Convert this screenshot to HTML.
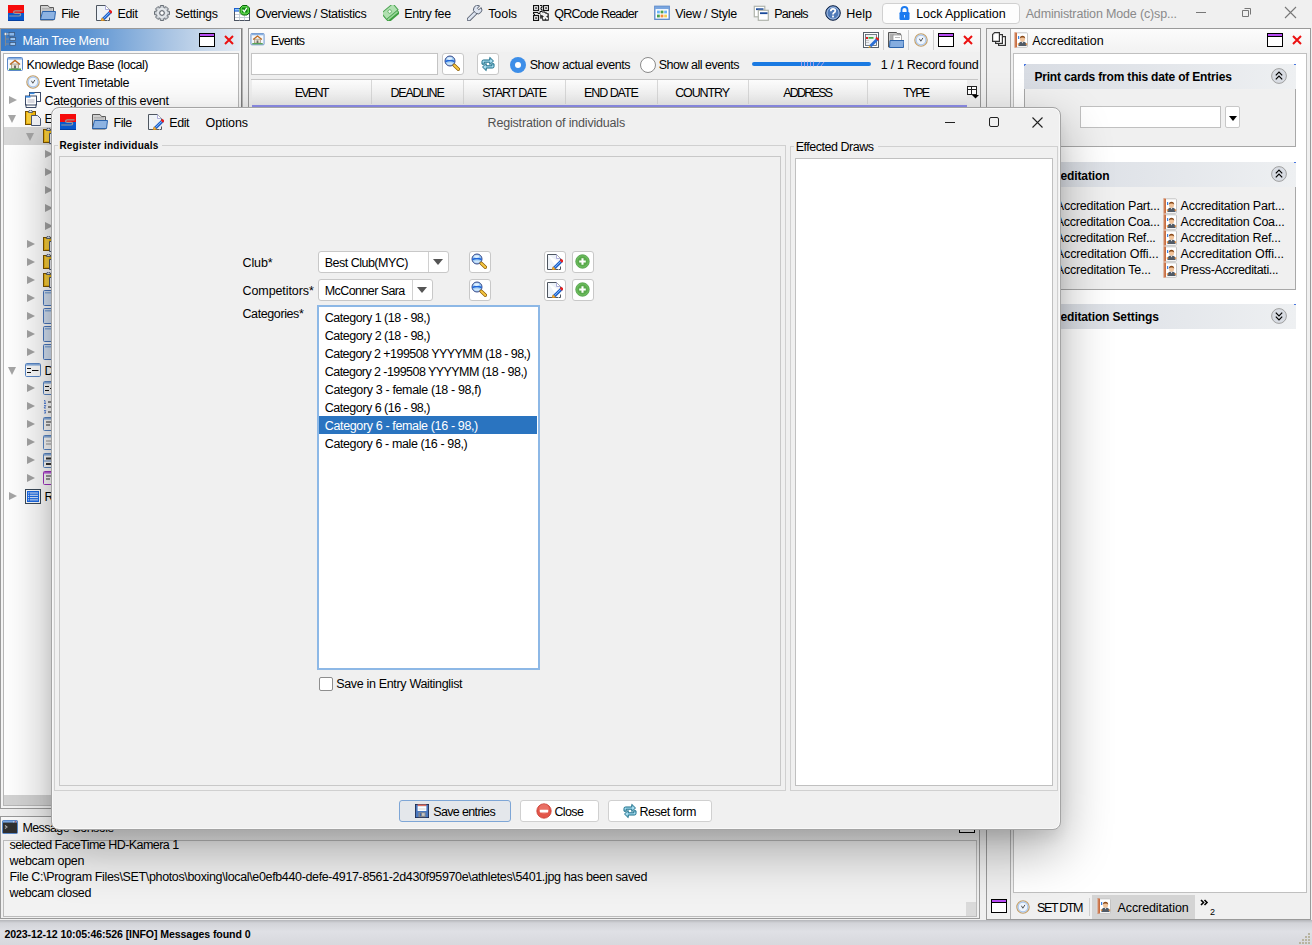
<!DOCTYPE html><html><head><meta charset="utf-8"><style>
*{box-sizing:border-box;margin:0;padding:0}
html,body{width:1312px;height:945px;overflow:hidden;background:#f0f0f0;font-family:"Liberation Sans",sans-serif;position:relative}
.a{position:absolute}
.t{position:absolute;line-height:1;white-space:pre;font-family:"Liberation Sans",sans-serif}
.maxi{position:absolute;width:16px;height:14px;border:1px solid #000;background:linear-gradient(#b84cf4 0 2px,#000 2px 3px,#fff 3px)}
.rx{position:absolute;width:11px;height:11px}
</style></head><body><svg class="a" style="left:8px;top:5px" width="16" height="16" viewBox="0 0 16 16"><rect x="0" y="0" width="16" height="8" fill="#f60a0a"/><rect x="0" y="8" width="16" height="8" fill="#0a58cc"/><rect x="0" y="15" width="16" height="1" fill="#0540a0"/><path d="M14.5 5.8H7.3Q5.6 5.8 5.6 7.2Q5.6 8.4 7.3 8.4H11.2Q12.7 8.4 12.6 9.8Q12.4 11 11 11H1.2" fill="none" stroke="#9a9a9a" stroke-width="1.2"/></svg>
<svg class="a" style="left:40px;top:5px" width="16" height="16" viewBox="0 0 16 16"><path d="M0.5 0.5H8L9.5 2.5H13.5V15H0.5Z" fill="#d0d0d0" stroke="#5a5a5a"/><path d="M2 3.5H12M2 5H12M2 6.5H12" stroke="#aaa" stroke-width="0.8"/><path d="M2.5 6.5H15.5L14.5 14.5H0.5Z" fill="#8db3e2" stroke="#2c64ac"/></svg>
<svg class="a" style="left:96px;top:5px" width="16" height="16" viewBox="0 0 16 16"><path d="M0.5 0.5H9.5L13.5 4.5V9M11 15.5H0.5V0.5" fill="#eef3f9" stroke="#4e5660" stroke-width="1"/><path d="M9.5 0.5V4.5H13.5" fill="#fff" stroke="#9a9ad0" stroke-width="0.8"/><path d="M7.2 14.2L14.6 6.8" stroke="#1d5fc8" stroke-width="3.2"/><path d="M7.6 13.6L14.4 6.8" stroke="#8cc4ff" stroke-width="1"/><path d="M13.6 5.6L15.8 7.8" stroke="#e81e1e" stroke-width="2.6"/><path d="M5 16.3L6 12.8L8.6 15.3Z" fill="#f4b83a" stroke="#c87a10" stroke-width="0.7"/><path d="M11.5 15.5H13.5V12.5" fill="none" stroke="#4e5660" stroke-width="1"/></svg>
<svg class="a" style="left:154px;top:5px" width="16" height="16" viewBox="0 0 16 16"><path d="M13.24 6.03 L15.42 6.34 L15.42 9.66 L13.24 9.97 L13.10 10.31 L14.42 12.07 L12.07 14.42 L10.31 13.10 L9.97 13.24 L9.66 15.42 L6.34 15.42 L6.03 13.24 L5.69 13.10 L3.93 14.42 L1.58 12.07 L2.90 10.31 L2.76 9.97 L0.58 9.66 L0.58 6.34 L2.76 6.03 L2.90 5.69 L1.58 3.93 L3.93 1.58 L5.69 2.90 L6.03 2.76 L6.34 0.58 L9.66 0.58 L9.97 2.76 L10.31 2.90 L12.07 1.58 L14.42 3.93 L13.10 5.69Z" fill="#cfd3d8" stroke="#5f666e" stroke-width="1"/><circle cx="8" cy="8" r="4.2" fill="none" stroke="#e9ecef" stroke-width="1.4"/><circle cx="8" cy="8" r="2.3" fill="#fff" stroke="#50565e" stroke-width="1"/></svg>
<svg class="a" style="left:234px;top:5px" width="16" height="16" viewBox="0 0 16 16"><rect x="0.5" y="3.5" width="15" height="12" fill="#fff" stroke="#4a5260"/><path d="M1 9.5H15M1 12.5H15M5.5 8V15.5M10.5 9.5V15.5" stroke="#c0cad4" stroke-width="0.9"/><rect x="0" y="3" width="5" height="3.6" fill="#1e5fd0"/><rect x="1" y="4.2" width="4" height="1.2" fill="#a8e0ff"/><path d="M8.5 0.5H13L15.5 3V7.5L13 10H8.5L6 7.5V3Z" fill="#5ad04a" stroke="#0a6a0a" stroke-width="1"/><rect x="8" y="2.5" width="5.5" height="5" fill="#0e8a10"/><path d="M8.6 4.6L10.3 6.6L12.8 2.8" fill="none" stroke="#fff" stroke-width="1.3"/></svg>
<svg class="a" style="left:383px;top:5px" width="16" height="16" viewBox="0 0 16 16"><g transform="rotate(-40 8 8)"><rect x="0" y="6" width="15" height="8" fill="#3f9e42"/><rect x="1" y="8" width="13" height="4" fill="#9ad89a"/><rect x="0.5" y="2" width="15" height="8" fill="#b0e0b0" stroke="#4ca452" stroke-width="1"/><circle cx="8" cy="6" r="1.8" fill="#eaf8ea" stroke="#4ca452" stroke-width="0.7"/></g></svg>
<svg class="a" style="left:467px;top:5px" width="16" height="16" viewBox="0 0 16 16"><path d="M2 14.2L9.2 7" stroke="#5a6272" stroke-width="4.4" stroke-linecap="round"/><path d="M2 14.2L9.2 7" stroke="#dde4f0" stroke-width="2.6" stroke-linecap="round"/><path d="M8.4 7.8A4 4 0 0 1 12.6 0.9L10.4 3.3L11.8 4.7L14.2 2.6A4 4 0 0 1 8.9 8.3Z" fill="#dde4f0" stroke="#5a6272" stroke-width="1"/></svg>
<svg class="a" style="left:533px;top:5px" width="16" height="16" viewBox="0 0 16 16"><rect x="0.5" y="0.5" width="5" height="5" fill="none" stroke="#111" stroke-width="1.2"/><rect x="10.5" y="0.5" width="5" height="5" fill="none" stroke="#111" stroke-width="1.2"/><rect x="0.5" y="10.5" width="5" height="5" fill="none" stroke="#111" stroke-width="1.2"/><rect x="2.3" y="2.3" width="1.5" height="1.5" fill="#111"/><rect x="12.3" y="2.3" width="1.5" height="1.5" fill="#111"/><rect x="2.3" y="12.3" width="1.5" height="1.5" fill="#111"/><path d="M7 0.5h2v2h-1v2h1v2h-2v2h-2v-1h-5v1h1v1h1M9 7h3v1h2v1h2v2h-2v1h2v2h-1v2h-2v-2h-1v2h-2v-2h-1v-2h1v-1h-2v2h-1M7 10h1v2" fill="none" stroke="#111" stroke-width="1"/></svg>
<svg class="a" style="left:654px;top:5px" width="16" height="16" viewBox="0 0 16 16"><rect x="0.8" y="1.3" width="14.4" height="13" fill="#fff" stroke="#5a88c8" stroke-width="1.3"/><rect x="1" y="1.5" width="14" height="2.6" fill="#7aa6e0"/><rect x="3" y="5.6" width="2.8" height="2.8" fill="#6ab4f8"/><rect x="6.6" y="5.6" width="2.8" height="2.8" fill="#4aa04a"/><rect x="10.2" y="5.6" width="2.8" height="2.8" fill="#6ab4f8"/><rect x="3" y="9.6" width="2.8" height="2.8" fill="#4aa04a"/><rect x="6.6" y="9.6" width="2.8" height="2.8" fill="#f58a3a"/><rect x="10.2" y="9.6" width="2.8" height="2.8" fill="#f0d050"/></svg>
<svg class="a" style="left:753px;top:5px" width="16" height="16" viewBox="0 0 16 16"><rect x="1.3" y="1.3" width="10.5" height="10.5" fill="#fff" stroke="#b0b4ac" stroke-width="1.2"/><rect x="3" y="3.3" width="7.5" height="1.8" fill="#1a4a9a"/><rect x="5.3" y="5.3" width="10" height="10" fill="#fff" stroke="#b0b4ac" stroke-width="1.2"/><rect x="7" y="7.3" width="7.5" height="1.8" fill="#1a4a9a"/></svg>
<svg class="a" style="left:825px;top:5px" width="16" height="16" viewBox="0 0 16 16"><circle cx="8" cy="8" r="7.3" fill="#4f7ab8" stroke="#0c1f40" stroke-width="1"/><circle cx="8" cy="8" r="6" fill="none" stroke="#c8d8f0" stroke-width="0.7"/><path d="M5.8 6.2Q5.8 3.8 8 3.8Q10.3 3.8 10.3 5.8Q10.3 7.2 8.6 8Q8 8.4 8 9.6" fill="none" stroke="#fff" stroke-width="1.7"/><rect x="7.1" y="10.6" width="1.8" height="1.8" fill="#fff"/></svg>
<span class="t" style="left:61.20px;top:8.42px;font-size:12.5px;font-weight:400;color:#000;letter-spacing:-0.519px;">File</span>
<span class="t" style="left:117.50px;top:8.42px;font-size:12.5px;font-weight:400;color:#000;letter-spacing:-0.382px;">Edit</span>
<span class="t" style="left:175.00px;top:8.42px;font-size:12.5px;font-weight:400;color:#000;letter-spacing:-0.325px;">Settings</span>
<span class="t" style="left:255.80px;top:8.42px;font-size:12.5px;font-weight:400;color:#000;letter-spacing:-0.375px;">Overviews / Statistics</span>
<span class="t" style="left:404.20px;top:8.42px;font-size:12.5px;font-weight:400;color:#000;letter-spacing:-0.391px;">Entry fee</span>
<span class="t" style="left:488.20px;top:8.42px;font-size:12.5px;font-weight:400;color:#000;letter-spacing:-0.072px;">Tools</span>
<span class="t" style="left:554.20px;top:8.42px;font-size:12.5px;font-weight:400;color:#000;letter-spacing:-0.767px;">QRCode Reader</span>
<span class="t" style="left:675.20px;top:8.42px;font-size:12.5px;font-weight:400;color:#000;letter-spacing:-0.289px;">View / Style</span>
<span class="t" style="left:774.20px;top:8.42px;font-size:12.5px;font-weight:400;color:#000;letter-spacing:-0.767px;">Panels</span>
<span class="t" style="left:846.20px;top:8.42px;font-size:12.5px;font-weight:400;color:#000;letter-spacing:0.060px;">Help</span>
<div class="a" style="left:882px;top:3px;width:138px;height:21px;background:#fdfdfd;border:1px solid #d0d0d0;border-radius:4px"></div>
<span class="t" style="left:916.20px;top:8.42px;font-size:12.5px;font-weight:400;color:#000;letter-spacing:-0.063px;">Lock Application</span>
<svg class="a" style="left:898px;top:5px" width="16" height="16" viewBox="0 0 16 16"><path d="M3.5 7V5A3 3 0 0 1 9.5 5V7" fill="none" stroke="#1a7af0" stroke-width="1.8"/><rect x="1.5" y="7" width="10" height="8" rx="1.2" fill="#1a7af0"/><rect x="6" y="10" width="1" height="2.5" fill="#cfe2fb"/></svg>
<span class="t" style="left:1025.70px;top:8.42px;font-size:12.5px;font-weight:400;color:#8a8a8a;letter-spacing:-0.156px;">Administration Mode (c)sp...</span>
<div class="a" style="left:1196px;top:12px;width:10px;height:1px;background:#777"></div>
<svg class="a" style="left:1240px;top:7px" width="12" height="12"><path d="M2.5 3.5h6v6h-6z M4.5 1.5h6v6" fill="none" stroke="#777" stroke-width="1"/></svg>
<svg class="a" style="left:1284px;top:6px" width="13" height="13"><path d="M1 1L12 12M12 1L1 12" stroke="#777" stroke-width="1.1"/></svg>
<div class="a" style="left:0;top:28px;width:242px;height:781px;background:#f5f5f5;border:1px solid #9a9a9a;border-right-color:#808080;box-shadow:1px 0 0 #b4b4b4"></div>
<div class="a" style="left:1px;top:29px;width:239px;height:22px;background:linear-gradient(to right,#397ac6 0%,#5b93d2 35%,#a9c4e3 70%,#e4ebf3 100%)"></div>
<span class="t" style="left:22.60px;top:35.42px;font-size:12.5px;font-weight:400;color:#fff;letter-spacing:-0.310px;">Main Tree Menu</span>
<div class="maxi" style="left:199px;top:33px"></div>
<svg class="a" style="left:224px;top:35px" width="10" height="10" viewBox="0 0 10 10"><path d="M1 1L9 9M9 1L1 9" stroke="#ec1010" stroke-width="2"/></svg>
<div class="a" style="left:3px;top:53px;width:236px;height:753px;background:#fff;border:1px solid #b8b8b8"></div>
<div class="a" style="left:4px;top:795px;width:235px;height:10px;background:#d4d4d4"></div>
<svg class="a" style="left:4px;top:32px" width="16" height="16" viewBox="0 0 16 16"><path d="M1.5 2V14M1.5 7H5M1.5 12H5" stroke="#8a8a8a" stroke-width="0.9"/><circle cx="1.5" cy="2" r="1.2" fill="#fff" stroke="#888" stroke-width="0.6"/><path d="M3 2H5" stroke="#fff" stroke-width="0.8"/><rect x="5" y="0.5" width="5.5" height="3.5" fill="#8ab8ec" stroke="#3a5070" stroke-width="0.7"/><rect x="6" y="5.5" width="5.5" height="3" fill="#9ac4f0" stroke="#3a5070" stroke-width="0.7"/><rect x="6" y="10.5" width="5.5" height="3" fill="#9ac4f0" stroke="#3a5070" stroke-width="0.7"/></svg>
<div class="a" style="left:4px;top:127px;width:60px;height:18px;background:#d9d9d9"></div>
<svg class="a" style="left:7px;top:57px" width="16" height="16" viewBox="0 0 16 16"><rect x="0.5" y="0.5" width="15" height="13" rx="1" fill="#f4f8fc" stroke="#5a88c8"/><rect x="1" y="1" width="14" height="1.6" fill="#8ab0e0"/><path d="M3 7.5L8 3.5L13 7.5" fill="none" stroke="#c06a20" stroke-width="1.5"/><rect x="4.5" y="7" width="7" height="4.5" fill="#e8e0d0" stroke="#8a7050" stroke-width="0.6"/><rect x="7" y="8.5" width="2" height="3" fill="#6a6a6a"/><rect x="2" y="11.5" width="12" height="1.5" fill="#50a050"/></svg>
<span class="t" style="left:26.60px;top:59.42px;font-size:12.5px;font-weight:400;color:#000;letter-spacing:-0.449px;">Knowledge Base (local)</span>
<svg class="a" style="left:26px;top:75px" width="14" height="14" viewBox="0 0 16 16"><circle cx="8" cy="8" r="7.1" fill="#e4eefa" stroke="#c4a06a" stroke-width="1.3"/><circle cx="8" cy="8" r="5.6" fill="#eef5fd" stroke="#88b0e4" stroke-width="0.9"/><path d="M6.2 6.6L7.8 9.4L10.2 5.6" fill="none" stroke="#4a4a4a" stroke-width="1.1"/></svg>
<span class="t" style="left:44.50px;top:77.42px;font-size:12.5px;font-weight:400;color:#000;letter-spacing:-0.339px;">Event Timetable</span>
<div class="a" style="left:9px;top:96.0px;width:0;height:0;border-top:4.5px solid transparent;border-bottom:4.5px solid transparent;border-left:8px solid #a6a6a6"></div>
<svg class="a" style="left:25px;top:92px" width="16" height="16" viewBox="0 0 16 16"><rect x="4.5" y="0.5" width="11" height="9" fill="#fff" stroke="#2a3a5a" stroke-width="0.9"/><rect x="4.5" y="0.5" width="5" height="1.6" fill="#3a8ae0"/><rect x="0.5" y="4" width="11" height="9" fill="#fff" stroke="#2a3a5a" stroke-width="0.9"/><rect x="0.5" y="4" width="5" height="1.6" fill="#3a8ae0"/><path d="M2.5 8H9.5M2.5 10H9.5" stroke="#aab" stroke-width="0.8"/><path d="M1 12.5V15.5H11V12.5" fill="none" stroke="#2a3a5a" stroke-width="0.9"/></svg>
<span class="t" style="left:44.50px;top:95.42px;font-size:12.5px;font-weight:400;color:#000;letter-spacing:-0.301px;">Categories of this event</span>
<div class="a" style="left:8px;top:115px;width:0;height:0;border-left:4.5px solid transparent;border-right:4.5px solid transparent;border-top:8px solid #a6a6a6"></div>
<svg class="a" style="left:25px;top:110px" width="16" height="16" viewBox="0 0 16 16"><rect x="0.5" y="1.5" width="10" height="13" fill="#f0b810" stroke="#7a5400" stroke-width="1"/><rect x="2" y="3" width="4" height="10" fill="#ffe060" opacity="0.6"/><path d="M3.5 2.5Q3.5 0 5.5 0Q7.5 0 7.5 2.5Z" fill="#e8eef8" stroke="#3a4a6a" stroke-width="0.8"/><path d="M6.5 5.5H12.5L15.5 8.5V15.5H6.5Z" fill="#f4f6fa" stroke="#3a4a6a" stroke-width="0.9"/></svg>
<span class="t" style="left:44.50px;top:113.42px;font-size:12.5px;font-weight:400;color:#000;">E</span>
<div class="a" style="left:26px;top:133px;width:0;height:0;border-left:4.5px solid transparent;border-right:4.5px solid transparent;border-top:8px solid #a6a6a6"></div>
<svg class="a" style="left:43px;top:128px" width="16" height="16" viewBox="0 0 16 16"><rect x="0.5" y="1.5" width="10" height="13" fill="#f0b810" stroke="#7a5400" stroke-width="1"/><rect x="2" y="3" width="4" height="10" fill="#ffe060" opacity="0.6"/><path d="M3.5 2.5Q3.5 0 5.5 0Q7.5 0 7.5 2.5Z" fill="#e8eef8" stroke="#3a4a6a" stroke-width="0.8"/><path d="M6.5 5.5H12.5L15.5 8.5V15.5H6.5Z" fill="#f4f6fa" stroke="#3a4a6a" stroke-width="0.9"/></svg>
<div class="a" style="left:45px;top:150.0px;width:0;height:0;border-top:4.5px solid transparent;border-bottom:4.5px solid transparent;border-left:8px solid #a6a6a6"></div>
<div class="a" style="left:45px;top:168.0px;width:0;height:0;border-top:4.5px solid transparent;border-bottom:4.5px solid transparent;border-left:8px solid #a6a6a6"></div>
<div class="a" style="left:45px;top:186.0px;width:0;height:0;border-top:4.5px solid transparent;border-bottom:4.5px solid transparent;border-left:8px solid #a6a6a6"></div>
<div class="a" style="left:45px;top:204.0px;width:0;height:0;border-top:4.5px solid transparent;border-bottom:4.5px solid transparent;border-left:8px solid #a6a6a6"></div>
<div class="a" style="left:45px;top:222.0px;width:0;height:0;border-top:4.5px solid transparent;border-bottom:4.5px solid transparent;border-left:8px solid #a6a6a6"></div>
<div class="a" style="left:27px;top:240.0px;width:0;height:0;border-top:4.5px solid transparent;border-bottom:4.5px solid transparent;border-left:8px solid #a6a6a6"></div>
<svg class="a" style="left:43px;top:236px" width="16" height="16" viewBox="0 0 16 16"><rect x="0.5" y="1.5" width="10" height="13" fill="#f0b810" stroke="#7a5400" stroke-width="1"/><rect x="2" y="3" width="4" height="10" fill="#ffe060" opacity="0.6"/><path d="M3.5 2.5Q3.5 0 5.5 0Q7.5 0 7.5 2.5Z" fill="#e8eef8" stroke="#3a4a6a" stroke-width="0.8"/><path d="M6.5 5.5H12.5L15.5 8.5V15.5H6.5Z" fill="#f4f6fa" stroke="#3a4a6a" stroke-width="0.9"/></svg>
<div class="a" style="left:27px;top:258.0px;width:0;height:0;border-top:4.5px solid transparent;border-bottom:4.5px solid transparent;border-left:8px solid #a6a6a6"></div>
<svg class="a" style="left:43px;top:254px" width="16" height="16" viewBox="0 0 16 16"><rect x="0.5" y="1.5" width="10" height="13" fill="#f0b810" stroke="#7a5400" stroke-width="1"/><rect x="2" y="3" width="4" height="10" fill="#ffe060" opacity="0.6"/><path d="M3.5 2.5Q3.5 0 5.5 0Q7.5 0 7.5 2.5Z" fill="#e8eef8" stroke="#3a4a6a" stroke-width="0.8"/><path d="M6.5 5.5H12.5L15.5 8.5V15.5H6.5Z" fill="#f4f6fa" stroke="#3a4a6a" stroke-width="0.9"/></svg>
<div class="a" style="left:27px;top:276.0px;width:0;height:0;border-top:4.5px solid transparent;border-bottom:4.5px solid transparent;border-left:8px solid #a6a6a6"></div>
<svg class="a" style="left:43px;top:272px" width="16" height="16" viewBox="0 0 16 16"><rect x="0.5" y="1.5" width="10" height="13" fill="#f0b810" stroke="#7a5400" stroke-width="1"/><rect x="2" y="3" width="4" height="10" fill="#ffe060" opacity="0.6"/><path d="M3.5 2.5Q3.5 0 5.5 0Q7.5 0 7.5 2.5Z" fill="#e8eef8" stroke="#3a4a6a" stroke-width="0.8"/><path d="M6.5 5.5H12.5L15.5 8.5V15.5H6.5Z" fill="#f4f6fa" stroke="#3a4a6a" stroke-width="0.9"/></svg>
<div class="a" style="left:27px;top:294.0px;width:0;height:0;border-top:4.5px solid transparent;border-bottom:4.5px solid transparent;border-left:8px solid #a6a6a6"></div>
<svg class="a" style="left:43px;top:290px" width="16" height="16" viewBox="0 0 16 16"><rect x="0.5" y="0.5" width="13" height="15" rx="1" fill="#d6e4f6" stroke="#4a78c0"/><rect x="2" y="2" width="10" height="1.5" fill="#8ab0e0"/><path d="M10 15L15 9V15Z" fill="#e8c060"/></svg>
<div class="a" style="left:27px;top:312.0px;width:0;height:0;border-top:4.5px solid transparent;border-bottom:4.5px solid transparent;border-left:8px solid #a6a6a6"></div>
<svg class="a" style="left:43px;top:308px" width="16" height="16" viewBox="0 0 16 16"><rect x="0.5" y="0.5" width="13" height="15" rx="1" fill="#d6e4f6" stroke="#4a78c0"/><rect x="2" y="2" width="10" height="1.5" fill="#8ab0e0"/><path d="M10 15L15 9V15Z" fill="#e8c060"/></svg>
<div class="a" style="left:27px;top:330.0px;width:0;height:0;border-top:4.5px solid transparent;border-bottom:4.5px solid transparent;border-left:8px solid #a6a6a6"></div>
<svg class="a" style="left:43px;top:326px" width="16" height="16" viewBox="0 0 16 16"><rect x="0.5" y="0.5" width="13" height="15" rx="1" fill="#d6e4f6" stroke="#4a78c0"/><rect x="2" y="2" width="10" height="1.5" fill="#8ab0e0"/><path d="M10 15L15 9V15Z" fill="#e8c060"/></svg>
<div class="a" style="left:27px;top:348.0px;width:0;height:0;border-top:4.5px solid transparent;border-bottom:4.5px solid transparent;border-left:8px solid #a6a6a6"></div>
<svg class="a" style="left:43px;top:344px" width="16" height="16" viewBox="0 0 16 16"><rect x="0.5" y="0.5" width="13" height="15" rx="1" fill="#d6e4f6" stroke="#4a78c0"/><rect x="2" y="2" width="10" height="1.5" fill="#8ab0e0"/><path d="M10 15L15 9V15Z" fill="#e8c060"/></svg>
<div class="a" style="left:8px;top:367px;width:0;height:0;border-left:4.5px solid transparent;border-right:4.5px solid transparent;border-top:8px solid #a6a6a6"></div>
<svg class="a" style="left:25px;top:363px" width="16" height="16" viewBox="0 0 16 16"><rect x="0.5" y="0.5" width="15" height="13" rx="1.2" fill="#fff" stroke="#5a88c8" stroke-width="1"/><rect x="1" y="1" width="14" height="1.6" fill="#8ab0e0"/><path d="M2 5.5H6M7 7.5H13.5M2 9.5H6" stroke="#111" stroke-width="1.2"/></svg>
<span class="t" style="left:44.50px;top:365.42px;font-size:12.5px;font-weight:400;color:#000;">D</span>
<div class="a" style="left:27px;top:384.0px;width:0;height:0;border-top:4.5px solid transparent;border-bottom:4.5px solid transparent;border-left:8px solid #a6a6a6"></div>
<svg class="a" style="left:43px;top:381px" width="16" height="16" viewBox="0 0 16 16"><rect x="0.5" y="0.5" width="15" height="13" rx="1.2" fill="#fff" stroke="#5a88c8" stroke-width="1"/><rect x="1" y="1" width="14" height="1.6" fill="#8ab0e0"/><path d="M2 5.5H6M7 7.5H13.5M2 9.5H6" stroke="#111" stroke-width="1.2"/></svg>
<div class="a" style="left:27px;top:402.0px;width:0;height:0;border-top:4.5px solid transparent;border-bottom:4.5px solid transparent;border-left:8px solid #a6a6a6"></div>
<svg class="a" style="left:43px;top:399px" width="16" height="16" viewBox="0 0 16 16"><path d="M1 1.5H2V4.5M1 4.5H3M1 6.5H2.8L1 9H3M1 11.5H2.8L2 12.8L2.8 14H1" fill="none" stroke="#4a7ad8" stroke-width="0.9"/><path d="M5 3H13M5 8H13M5 13H13" stroke="#222" stroke-width="1.2"/></svg>
<div class="a" style="left:27px;top:420.0px;width:0;height:0;border-top:4.5px solid transparent;border-bottom:4.5px solid transparent;border-left:8px solid #a6a6a6"></div>
<svg class="a" style="left:43px;top:417px" width="16" height="16" viewBox="0 0 16 16"><rect x="0.5" y="0.5" width="12" height="13" rx="1" fill="#fff" stroke="#5a88c8"/><rect x="1" y="1" width="11" height="1.6" fill="#8ab0e0"/><path d="M3 5H10M3 8H7" stroke="#333" stroke-width="1.1"/><path d="M9 15L15 9" stroke="#c8641a" stroke-width="2.6"/><circle cx="10" cy="14" r="1.6" fill="#e8a060"/></svg>
<div class="a" style="left:27px;top:438.0px;width:0;height:0;border-top:4.5px solid transparent;border-bottom:4.5px solid transparent;border-left:8px solid #a6a6a6"></div>
<svg class="a" style="left:43px;top:435px" width="16" height="16" viewBox="0 0 16 16"><rect x="0.5" y="0.5" width="12" height="14" rx="1" fill="#fff" stroke="#5a88c8"/><rect x="1" y="1" width="11" height="1.6" fill="#8ab0e0"/><path d="M3 6H9M3 9H9" stroke="#999" stroke-width="1"/></svg>
<div class="a" style="left:27px;top:456.0px;width:0;height:0;border-top:4.5px solid transparent;border-bottom:4.5px solid transparent;border-left:8px solid #a6a6a6"></div>
<svg class="a" style="left:43px;top:453px" width="16" height="16" viewBox="0 0 16 16"><rect x="0.5" y="0.5" width="12" height="14" rx="1" fill="#fff" stroke="#5a88c8"/><rect x="1" y="1" width="11" height="1.6" fill="#8ab0e0"/><path d="M3 5.5H12M3 11H12" stroke="#333" stroke-width="1.8"/><path d="M1 8H12" stroke="#5a88c8" stroke-width="1"/></svg>
<div class="a" style="left:27px;top:474.0px;width:0;height:0;border-top:4.5px solid transparent;border-bottom:4.5px solid transparent;border-left:8px solid #a6a6a6"></div>
<svg class="a" style="left:43px;top:471px" width="16" height="16" viewBox="0 0 16 16"><rect x="0.5" y="0.5" width="12" height="13" rx="1" fill="#fff" stroke="#a030c0"/><rect x="1" y="1" width="11" height="1.6" fill="#c060e0"/><path d="M3 5H10M3 8H7" stroke="#333" stroke-width="1.1"/><path d="M9 15L15 9" stroke="#c8641a" stroke-width="2.6"/><circle cx="10" cy="14" r="1.6" fill="#e8a060"/></svg>
<div class="a" style="left:9px;top:492.0px;width:0;height:0;border-top:4.5px solid transparent;border-bottom:4.5px solid transparent;border-left:8px solid #a6a6a6"></div>
<svg class="a" style="left:25px;top:489px" width="16" height="16" viewBox="0 0 16 16"><rect x="0.5" y="0.5" width="15" height="14" fill="#fff" stroke="#3a4a5a" stroke-width="1"/><rect x="2" y="2" width="12" height="11" fill="#1a6ae8"/><path d="M3 4H13M3 6.3H13M3 8.6H13M3 10.9H13" stroke="#fff" stroke-width="0.9"/><path d="M4.5 3.5V12" stroke="#1a6ae8" stroke-width="0.8"/></svg>
<span class="t" style="left:44.50px;top:491.42px;font-size:12.5px;font-weight:400;color:#000;">R</span>
<div class="a" style="left:248px;top:28px;width:733px;height:781px;background:#f0f0f0;border:1px solid #9a9a9a"></div>
<div class="a" style="left:249px;top:29px;width:731px;height:23px;background:linear-gradient(#fcfcfc,#f2f2f2)"></div>
<span class="t" style="left:270.70px;top:35.42px;font-size:12.5px;font-weight:400;color:#000;letter-spacing:-0.764px;">Events</span>
<svg class="a" style="left:250px;top:33px" width="15" height="14" viewBox="0 0 16 16"><rect x="0.5" y="0.5" width="15" height="13" rx="1" fill="#f4f8fc" stroke="#5a88c8"/><rect x="1" y="1" width="14" height="1.6" fill="#8ab0e0"/><path d="M3 7.5L8 3.5L13 7.5" fill="none" stroke="#c06a20" stroke-width="1.5"/><rect x="4.5" y="7" width="7" height="4.5" fill="#e8e0d0" stroke="#8a7050" stroke-width="0.6"/><rect x="7" y="8.5" width="2" height="3" fill="#6a6a6a"/><rect x="2" y="11.5" width="12" height="1.5" fill="#50a050"/></svg>
<svg class="a" style="left:863px;top:32px" width="16" height="16" viewBox="0 0 16 16"><rect x="0.5" y="0.5" width="15" height="15" fill="#fff" stroke="#56606a"/><rect x="2.5" y="2.5" width="11" height="11" fill="#eef1f5" stroke="#56606a" stroke-width="0.8"/><rect x="3" y="5" width="2" height="2" fill="#e02020"/><rect x="5.5" y="5.2" width="5" height="1.4" fill="#1a9a1a"/><path d="M3 8.5H6M3 10.5H6" stroke="#bbb" stroke-width="0.8"/><path d="M7 14.5L14.5 7" stroke="#2b6fd6" stroke-width="2.8"/><path d="M13 5.5L15.6 8" stroke="#e0201a" stroke-width="2"/><path d="M5.5 16L6.3 13.4L8.2 15Z" fill="#f0b030"/></svg>
<svg class="a" style="left:888px;top:32px" width="16" height="16" viewBox="0 0 16 16"><path d="M0.5 0.5H8.5L9.5 1.8H12.5V15H0.5Z" fill="#c8c8c8" stroke="#555"/><path d="M2 3H6M2 5H6M2 7H6" stroke="#888" stroke-width="0.8"/><rect x="5" y="3" width="8.5" height="6" fill="#fff" stroke="#999" stroke-width="0.8"/><path d="M7 5.5H12" stroke="#aaa" stroke-width="0.8"/><path d="M2 8.5H16L15.5 15.5H1.5Z" fill="#85ade0" stroke="#2c64ac"/></svg>
<svg class="a" style="left:914px;top:33px" width="14" height="14" viewBox="0 0 16 16"><circle cx="8" cy="8" r="7.1" fill="#e4eefa" stroke="#c4a06a" stroke-width="1.3"/><circle cx="8" cy="8" r="5.6" fill="#eef5fd" stroke="#88b0e4" stroke-width="0.9"/><path d="M6.2 6.6L7.8 9.4L10.2 5.6" fill="none" stroke="#4a4a4a" stroke-width="1.1"/></svg>
<div class="a" style="left:883px;top:30px;width:1px;height:20px;background:#d0d0d0"></div>
<div class="a" style="left:908px;top:30px;width:1px;height:20px;background:#d0d0d0"></div>
<div class="a" style="left:933px;top:30px;width:1px;height:20px;background:#d0d0d0"></div>
<div class="maxi" style="left:938px;top:33px"></div>
<svg class="a" style="left:963px;top:35px" width="10" height="10" viewBox="0 0 10 10"><path d="M1 1L9 9M9 1L1 9" stroke="#ec1010" stroke-width="2"/></svg>
<div class="a" style="left:251px;top:53px;width:187px;height:22px;background:#fff;border:1px solid #c4c4c4"></div>
<div class="a" style="left:442px;top:53px;width:22px;height:22px;background:#fff;border:1px solid #c8c8c8;border-radius:3px"></div>
<div class="a" style="left:477px;top:53px;width:22px;height:22px;background:#fff;border:1px solid #c8c8c8;border-radius:3px"></div>
<div class="a" style="left:510px;top:57px;width:16px;height:16px;border-radius:50%;background:#3d8ee8"></div><div class="a" style="left:515px;top:62px;width:6px;height:6px;border-radius:50%;background:#fff"></div>
<span class="t" style="left:529.70px;top:58.82px;font-size:12.5px;font-weight:400;color:#000;letter-spacing:-0.442px;">Show actual events</span>
<div class="a" style="left:640px;top:57px;width:16px;height:16px;border-radius:50%;background:#fff;border:1px solid #8a8a8a"></div>
<span class="t" style="left:658.70px;top:58.82px;font-size:12.5px;font-weight:400;color:#000;letter-spacing:-0.476px;">Show all events</span>
<div class="a" style="left:752px;top:62px;width:119px;height:4px;border-radius:2px;background:#1a7ae2"></div>
<svg class="a" style="left:800px;top:61px" width="26" height="6"><path d="M1.5 0.5V5.5M4.5 0.5V5.5M7.5 0.5V5.5M10.5 0.5V5.5M13.5 0.5V5.5M17 5L20 1M21 5L24 1" stroke="#c8a8e8" stroke-width="0.8"/></svg>
<span class="t" style="left:880.80px;top:58.82px;font-size:12.5px;font-weight:400;color:#000;letter-spacing:-0.292px;">1 / 1 Record found</span>
<div class="a" style="left:251px;top:79px;width:727px;height:29px;background:#f0f0f0;border-top:1px solid #c8c8c8"></div>
<div class="a" style="left:252px;top:80px;width:715px;height:25px;background:linear-gradient(#fefefe,#f4f4f4 60%,#ececec)"></div>
<div class="a" style="left:252px;top:105px;width:715px;height:3px;background:#9090ec"></div>
<div class="a" style="left:371px;top:80px;width:1px;height:24px;background:#dadada"></div>
<div class="a" style="left:463px;top:80px;width:1px;height:24px;background:#dadada"></div>
<div class="a" style="left:565px;top:80px;width:1px;height:24px;background:#dadada"></div>
<div class="a" style="left:657px;top:80px;width:1px;height:24px;background:#dadada"></div>
<div class="a" style="left:748px;top:80px;width:1px;height:24px;background:#dadada"></div>
<div class="a" style="left:867px;top:80px;width:1px;height:24px;background:#dadada"></div>
<span class="t" style="left:294.70px;top:87.42px;font-size:12.5px;font-weight:400;color:#000;letter-spacing:-1.772px;">EVENT</span>
<span class="t" style="left:390.40px;top:87.42px;font-size:12.5px;font-weight:400;color:#000;letter-spacing:-1.162px;">DEADLINE</span>
<span class="t" style="left:482.20px;top:87.42px;font-size:12.5px;font-weight:400;color:#000;letter-spacing:-1.176px;">START DATE</span>
<span class="t" style="left:584.00px;top:87.42px;font-size:12.5px;font-weight:400;color:#000;letter-spacing:-1.054px;">END DATE</span>
<span class="t" style="left:675.20px;top:87.42px;font-size:12.5px;font-weight:400;color:#000;letter-spacing:-1.116px;">COUNTRY</span>
<span class="t" style="left:783.20px;top:87.42px;font-size:12.5px;font-weight:400;color:#000;letter-spacing:-1.756px;">ADDRESS</span>
<span class="t" style="left:903.20px;top:87.42px;font-size:12.5px;font-weight:400;color:#000;letter-spacing:-1.919px;">TYPE</span>
<div class="a" style="left:986px;top:28px;width:325px;height:892px;background:#f0f0f0;border:1px solid #9a9a9a"></div>
<div class="a" style="left:1010px;top:29px;width:1px;height:890px;background:#b0b0b0"></div>
<div class="a" style="left:1011px;top:29px;width:299px;height:24px;background:linear-gradient(#fcfcfc,#f2f2f2)"></div>
<span class="t" style="left:1032.20px;top:35.12px;font-size:12.5px;font-weight:400;color:#000;letter-spacing:-0.072px;">Accreditation</span>
<svg class="a" style="left:992px;top:32px" width="14" height="14" viewBox="0 0 14 14"><rect x="6.6" y="4.6" width="6.8" height="8.8" fill="#fff" stroke="#333" stroke-width="1.2"/><rect x="3.6" y="2.6" width="6.8" height="8.8" fill="#fff" stroke="#333" stroke-width="1.2"/><path d="M2.6 0.6H7.4V9.4H0.6V2.6Z" fill="#fff" stroke="#333" stroke-width="1.2"/><path d="M0.9 2.5L2.5 0.9V2.5Z" fill="#aaa"/></svg>
<svg class="a" style="left:1013px;top:32px" width="16" height="16" viewBox="0 0 16 16"><rect x="3.5" y="0.8" width="11" height="14.5" rx="1" fill="#fff" stroke="#c4c4c4" stroke-width="1"/><rect x="1.4" y="0.5" width="2.4" height="15" fill="#c85a24"/><path d="M0.6 2H2.6M0.6 4H2.6M0.6 6H2.6M0.6 8H2.6M0.6 10H2.6M0.6 12H2.6M0.6 14H2.6" stroke="#e8e8e8" stroke-width="0.9"/><rect x="5" y="4" width="1.2" height="3" fill="#3a80e0"/><path d="M5.4 14Q5.4 9.6 9.5 9.6Q13.6 9.6 13.6 14Z" fill="#505a66"/><path d="M8.6 9.8L9.5 11.5L10.4 9.8Z" fill="#eee"/><circle cx="9.5" cy="7.2" r="2.5" fill="#f2c49a"/><path d="M6.8 6.8Q6.8 3.8 9.5 3.8Q12.2 3.8 12.2 6.8Q11.2 5.4 9.5 5.6Q7.8 5.4 6.8 6.8Z" fill="#8a4a1a"/><path d="M5 12.6L6 11.6M14 12.6L13 11.6" stroke="#e89040" stroke-width="1.6"/></svg>
<div class="maxi" style="left:1267px;top:33px"></div>
<svg class="a" style="left:1292px;top:35px" width="10" height="10" viewBox="0 0 10 10"><path d="M1 1L9 9M9 1L1 9" stroke="#ec1010" stroke-width="2"/></svg>
<div class="a" style="left:1013px;top:53px;width:294px;height:840px;background:#fff;border:1px solid #c0c0c0"></div>
<div class="a" style="left:1024px;top:64px;width:272px;height:25px;background:linear-gradient(to right,#d8dce3,#eef0f2)"></div>
<span class="t" style="left:1034.40px;top:71.04px;font-size:12.0px;font-weight:700;color:#000;letter-spacing:-0.182px;">Print cards from this date of Entries</span>
<div class="a" style="left:1024px;top:89px;width:272px;height:58px;background:#f0f0f0;border:1px solid #a8a8a8;border-top:none"></div>
<div class="a" style="left:1080px;top:106px;width:141px;height:22px;background:#fff;border:1px solid #c0c0c0"></div>
<div class="a" style="left:1225px;top:106px;width:15px;height:22px;background:#fff;border:1px solid #c8c8c8;border-radius:2px"></div>
<div class="a" style="left:1024px;top:162px;width:272px;height:25px;background:linear-gradient(to right,#d8dce3,#eef0f2)"></div>
<span class="t" style="left:1034.40px;top:169.84px;font-size:12.0px;font-weight:700;color:#000;letter-spacing:-0.132px;">Accreditation</span>
<div class="a" style="left:1024px;top:187px;width:272px;height:103px;background:#f0f0f0;border:1px solid #a8a8a8;border-top:none"></div>
<span class="t" style="left:1055.80px;top:200.12px;font-size:12.5px;font-weight:400;color:#000;letter-spacing:-0.249px;">Accreditation Part...</span>
<span class="t" style="left:1180.60px;top:200.12px;font-size:12.5px;font-weight:400;color:#000;letter-spacing:-0.249px;">Accreditation Part...</span>
<span class="t" style="left:1055.80px;top:216.12px;font-size:12.5px;font-weight:400;color:#000;letter-spacing:-0.263px;">Accreditation Coa...</span>
<span class="t" style="left:1180.60px;top:216.12px;font-size:12.5px;font-weight:400;color:#000;letter-spacing:-0.263px;">Accreditation Coa...</span>
<span class="t" style="left:1055.80px;top:232.12px;font-size:12.5px;font-weight:400;color:#000;letter-spacing:-0.295px;">Accreditation Ref...</span>
<span class="t" style="left:1180.60px;top:232.12px;font-size:12.5px;font-weight:400;color:#000;letter-spacing:-0.274px;">Accreditation Ref...</span>
<span class="t" style="left:1055.80px;top:248.12px;font-size:12.5px;font-weight:400;color:#000;letter-spacing:-0.124px;">Accreditation Offi...</span>
<span class="t" style="left:1180.60px;top:248.12px;font-size:12.5px;font-weight:400;color:#000;letter-spacing:-0.094px;">Accreditation Offi...</span>
<span class="t" style="left:1055.80px;top:264.12px;font-size:12.5px;font-weight:400;color:#000;letter-spacing:-0.219px;">Accreditation Te...</span>
<span class="t" style="left:1180.60px;top:264.12px;font-size:12.5px;font-weight:400;color:#000;letter-spacing:-0.368px;">Press-Accreditati...</span>
<div class="a" style="left:1024px;top:304px;width:272px;height:25px;background:linear-gradient(to right,#d8dce3,#eef0f2)"></div>
<span class="t" style="left:1034.40px;top:311.44px;font-size:12.0px;font-weight:700;color:#000;letter-spacing:-0.136px;">Accreditation Settings</span>
<div class="a" style="left:1092px;top:895px;width:103px;height:24px;background:#d4d4d4"></div>
<div class="maxi" style="left:991px;top:899px"></div>
<span class="t" style="left:1037.00px;top:901.82px;font-size:12.5px;font-weight:400;color:#000;letter-spacing:-1.357px;">SET DTM</span>
<svg class="a" style="left:1016px;top:900px" width="14" height="14" viewBox="0 0 16 16"><circle cx="8" cy="8" r="7.1" fill="#e4eefa" stroke="#c4a06a" stroke-width="1.3"/><circle cx="8" cy="8" r="5.6" fill="#eef5fd" stroke="#88b0e4" stroke-width="0.9"/><path d="M6.2 6.6L7.8 9.4L10.2 5.6" fill="none" stroke="#4a4a4a" stroke-width="1.1"/></svg>
<svg class="a" style="left:1096px;top:898px" width="16" height="16" viewBox="0 0 16 16"><rect x="3.5" y="0.8" width="11" height="14.5" rx="1" fill="#fff" stroke="#c4c4c4" stroke-width="1"/><rect x="1.4" y="0.5" width="2.4" height="15" fill="#c85a24"/><path d="M0.6 2H2.6M0.6 4H2.6M0.6 6H2.6M0.6 8H2.6M0.6 10H2.6M0.6 12H2.6M0.6 14H2.6" stroke="#e8e8e8" stroke-width="0.9"/><rect x="5" y="4" width="1.2" height="3" fill="#3a80e0"/><path d="M5.4 14Q5.4 9.6 9.5 9.6Q13.6 9.6 13.6 14Z" fill="#505a66"/><path d="M8.6 9.8L9.5 11.5L10.4 9.8Z" fill="#eee"/><circle cx="9.5" cy="7.2" r="2.5" fill="#f2c49a"/><path d="M6.8 6.8Q6.8 3.8 9.5 3.8Q12.2 3.8 12.2 6.8Q11.2 5.4 9.5 5.6Q7.8 5.4 6.8 6.8Z" fill="#8a4a1a"/><path d="M5 12.6L6 11.6M14 12.6L13 11.6" stroke="#e89040" stroke-width="1.6"/></svg>
<div class="a" style="left:1089px;top:898px;width:1px;height:18px;background:#d0d0d0"></div>
<span class="t" style="left:1117.50px;top:901.82px;font-size:12.5px;font-weight:400;color:#000;letter-spacing:-0.089px;">Accreditation</span>
<svg class="a" style="left:1200px;top:899px" width="9" height="7"><path d="M1 1L3.5 3.5L1 6M4.5 1L7 3.5L4.5 6" fill="none" stroke="#000" stroke-width="1.6"/></svg>
<span class="t" style="left:1209.90px;top:907.58px;font-size:9.0px;font-weight:400;color:#000;">2</span>
<div class="a" style="left:0;top:816px;width:980px;height:103px;background:#f0f0f0;border:1px solid #9a9a9a"></div>
<div class="a" style="left:1px;top:817px;width:978px;height:23px;background:linear-gradient(#fafafa,#f0f0f0)"></div>
<svg class="a" style="left:2px;top:820px" width="16" height="16" viewBox="0 0 16 16"><rect x="0.5" y="0.5" width="15" height="13" rx="1" fill="#2a2a2a" stroke="#5a88c8" stroke-width="1"/><rect x="1" y="1" width="14" height="1.6" fill="#7aa6e0"/><rect x="11" y="1.3" width="1" height="1" fill="#ddd"/><rect x="13" y="1.3" width="1" height="1" fill="#e04040"/><path d="M3 5.5L5 7L3 8.5" fill="none" stroke="#fff" stroke-width="1.1"/><rect x="1" y="3" width="14" height="10" fill="#3a3a3a" opacity="0.4"/></svg>
<span class="t" style="left:22.40px;top:822.32px;font-size:12.5px;font-weight:400;color:#000;letter-spacing:-0.583px;">Message Console</span>
<div class="a" style="left:3px;top:840px;width:974px;height:77px;background:#f2f2f2;border:1px solid #bcbcbc"></div>
<div class="a" style="left:966px;top:902px;width:10px;height:14px;background:#dadada"></div>
<div class="maxi" style="left:959px;top:819px"></div>
<span class="t" style="left:9.50px;top:839.02px;font-size:12.5px;font-weight:400;color:#000;letter-spacing:-0.551px;">selected FaceTime HD-Kamera 1</span>
<span class="t" style="left:9.50px;top:855.02px;font-size:12.5px;font-weight:400;color:#000;letter-spacing:-0.293px;">webcam open</span>
<span class="t" style="left:9.50px;top:871.02px;font-size:12.5px;font-weight:400;color:#000;letter-spacing:-0.354px;">File C:\Program Files\SET\photos\boxing\local\e0efb440-defe-4917-8561-2d430f95970e\athletes\5401.jpg has been saved</span>
<span class="t" style="left:9.50px;top:887.02px;font-size:12.5px;font-weight:400;color:#000;letter-spacing:-0.355px;">webcam closed</span>
<div class="a" style="left:0;top:920px;width:1312px;height:25px;background:linear-gradient(#b4b5b9 0px,#d2d3d8 3px,#dfe0e5 45%,#d7d8dd 100%)"></div>
<span class="t" style="left:4.40px;top:928.83px;font-size:10.6px;font-weight:700;color:#000;letter-spacing:-0.101px;">2023-12-12 10:05:46:526 [INFO] Messages found 0</span>
<svg class="a" style="left:1299px;top:932px" width="12" height="12"><g fill="#b8b4a0"><rect x="9" y="1" width="2" height="2"/><rect x="6" y="4" width="2" height="2"/><rect x="9" y="4" width="2" height="2"/><rect x="3" y="7" width="2" height="2"/><rect x="6" y="7" width="2" height="2"/><rect x="9" y="7" width="2" height="2"/><rect x="0" y="10" width="2" height="2"/><rect x="3" y="10" width="2" height="2"/><rect x="6" y="10" width="2" height="2"/><rect x="9" y="10" width="2" height="2"/></g></svg>
<svg class="a" style="left:444px;top:55px" width="16" height="16" viewBox="0 0 16 16"><circle cx="6" cy="6" r="5" fill="#9cccf4" stroke="#3a4a8a" stroke-width="1"/><path d="M1.3 6.4Q6 4.6 10.7 6.4" stroke="#1e64d8" stroke-width="1.6" fill="none"/><ellipse cx="5.6" cy="3.6" rx="2.6" ry="1.4" fill="#e2f0ff"/><ellipse cx="6" cy="8.6" rx="3" ry="1.2" fill="#cfe4f8"/><path d="M10.2 10.2L14.4 14.2" stroke="#8a5a08" stroke-width="3.4" stroke-linecap="round"/><path d="M10.2 10.2L14.4 14.2" stroke="#f6c842" stroke-width="2" stroke-linecap="round"/></svg>
<svg class="a" style="left:480px;top:56px" width="16" height="16" viewBox="0 0 16 16"><path d="M2 8.2V5.5Q2 4 3.6 4H9.8V1.4L13.5 5L9.8 8.6V6.2H4.2V8.2Z" fill="#a8dcef" stroke="#136a86" stroke-width="1"/><path d="M14 7.8V10.5Q14 12 12.4 12H6.2V14.6L2.5 11L6.2 7.4V9.8H11.8V7.8Z" fill="#a8dcef" stroke="#136a86" stroke-width="1"/></svg>
<svg class="a" style="left:967px;top:86px" width="12" height="13" viewBox="0 0 12 13"><rect x="0.5" y="0.5" width="9" height="8" fill="#fff" stroke="#222" stroke-width="1"/><path d="M0.5 3.5H9.5M4.5 0.5V8.5" stroke="#222" stroke-width="1"/><path d="M5 9H12L8.5 12.5Z" fill="#000"/></svg>
<svg class="a" style="left:1271px;top:68px" width="16" height="16" viewBox="0 0 16 16"><circle cx="8" cy="8" r="7.4" fill="#d8dce3" stroke="#a0a0a0" stroke-width="1"/><path d="M4.8 7.4L8 4.2L11.2 7.4M4.8 11.4L8 8.2L11.2 11.4" fill="none" stroke="#000" stroke-width="1.2"/></svg>
<svg class="a" style="left:1271px;top:166px" width="16" height="16" viewBox="0 0 16 16"><circle cx="8" cy="8" r="7.4" fill="#d8dce3" stroke="#a0a0a0" stroke-width="1"/><path d="M4.8 7.4L8 4.2L11.2 7.4M4.8 11.4L8 8.2L11.2 11.4" fill="none" stroke="#000" stroke-width="1.2"/></svg>
<svg class="a" style="left:1271px;top:308px" width="16" height="16" viewBox="0 0 16 16"><circle cx="8" cy="8" r="7.4" fill="#d8dce3" stroke="#a0a0a0" stroke-width="1"/><path d="M4.8 4.6L8 7.8L11.2 4.6M4.8 8.6L8 11.8L11.2 8.6" fill="none" stroke="#000" stroke-width="1.2"/></svg>
<div class="a" style="left:1229px;top:116px;width:0;height:0;border-left:4px solid transparent;border-right:4px solid transparent;border-top:5px solid #000"></div>
<svg class="a" style="left:1162px;top:198px" width="16" height="16" viewBox="0 0 16 16"><rect x="3.5" y="0.8" width="11" height="14.5" rx="1" fill="#fff" stroke="#c4c4c4" stroke-width="1"/><rect x="1.4" y="0.5" width="2.4" height="15" fill="#c85a24"/><path d="M0.6 2H2.6M0.6 4H2.6M0.6 6H2.6M0.6 8H2.6M0.6 10H2.6M0.6 12H2.6M0.6 14H2.6" stroke="#e8e8e8" stroke-width="0.9"/><rect x="5" y="4" width="1.2" height="3" fill="#3a80e0"/><path d="M5.4 14Q5.4 9.6 9.5 9.6Q13.6 9.6 13.6 14Z" fill="#505a66"/><path d="M8.6 9.8L9.5 11.5L10.4 9.8Z" fill="#eee"/><circle cx="9.5" cy="7.2" r="2.5" fill="#f2c49a"/><path d="M6.8 6.8Q6.8 3.8 9.5 3.8Q12.2 3.8 12.2 6.8Q11.2 5.4 9.5 5.6Q7.8 5.4 6.8 6.8Z" fill="#8a4a1a"/><path d="M5 12.6L6 11.6M14 12.6L13 11.6" stroke="#e89040" stroke-width="1.6"/></svg>
<svg class="a" style="left:1162px;top:214px" width="16" height="16" viewBox="0 0 16 16"><rect x="3.5" y="0.8" width="11" height="14.5" rx="1" fill="#fff" stroke="#c4c4c4" stroke-width="1"/><rect x="1.4" y="0.5" width="2.4" height="15" fill="#c85a24"/><path d="M0.6 2H2.6M0.6 4H2.6M0.6 6H2.6M0.6 8H2.6M0.6 10H2.6M0.6 12H2.6M0.6 14H2.6" stroke="#e8e8e8" stroke-width="0.9"/><rect x="5" y="4" width="1.2" height="3" fill="#3a80e0"/><path d="M5.4 14Q5.4 9.6 9.5 9.6Q13.6 9.6 13.6 14Z" fill="#505a66"/><path d="M8.6 9.8L9.5 11.5L10.4 9.8Z" fill="#eee"/><circle cx="9.5" cy="7.2" r="2.5" fill="#f2c49a"/><path d="M6.8 6.8Q6.8 3.8 9.5 3.8Q12.2 3.8 12.2 6.8Q11.2 5.4 9.5 5.6Q7.8 5.4 6.8 6.8Z" fill="#8a4a1a"/><path d="M5 12.6L6 11.6M14 12.6L13 11.6" stroke="#e89040" stroke-width="1.6"/></svg>
<svg class="a" style="left:1162px;top:230px" width="16" height="16" viewBox="0 0 16 16"><rect x="3.5" y="0.8" width="11" height="14.5" rx="1" fill="#fff" stroke="#c4c4c4" stroke-width="1"/><rect x="1.4" y="0.5" width="2.4" height="15" fill="#c85a24"/><path d="M0.6 2H2.6M0.6 4H2.6M0.6 6H2.6M0.6 8H2.6M0.6 10H2.6M0.6 12H2.6M0.6 14H2.6" stroke="#e8e8e8" stroke-width="0.9"/><rect x="5" y="4" width="1.2" height="3" fill="#3a80e0"/><path d="M5.4 14Q5.4 9.6 9.5 9.6Q13.6 9.6 13.6 14Z" fill="#505a66"/><path d="M8.6 9.8L9.5 11.5L10.4 9.8Z" fill="#eee"/><circle cx="9.5" cy="7.2" r="2.5" fill="#f2c49a"/><path d="M6.8 6.8Q6.8 3.8 9.5 3.8Q12.2 3.8 12.2 6.8Q11.2 5.4 9.5 5.6Q7.8 5.4 6.8 6.8Z" fill="#8a4a1a"/><path d="M5 12.6L6 11.6M14 12.6L13 11.6" stroke="#e89040" stroke-width="1.6"/></svg>
<svg class="a" style="left:1162px;top:246px" width="16" height="16" viewBox="0 0 16 16"><rect x="3.5" y="0.8" width="11" height="14.5" rx="1" fill="#fff" stroke="#c4c4c4" stroke-width="1"/><rect x="1.4" y="0.5" width="2.4" height="15" fill="#c85a24"/><path d="M0.6 2H2.6M0.6 4H2.6M0.6 6H2.6M0.6 8H2.6M0.6 10H2.6M0.6 12H2.6M0.6 14H2.6" stroke="#e8e8e8" stroke-width="0.9"/><rect x="5" y="4" width="1.2" height="3" fill="#3a80e0"/><path d="M5.4 14Q5.4 9.6 9.5 9.6Q13.6 9.6 13.6 14Z" fill="#505a66"/><path d="M8.6 9.8L9.5 11.5L10.4 9.8Z" fill="#eee"/><circle cx="9.5" cy="7.2" r="2.5" fill="#f2c49a"/><path d="M6.8 6.8Q6.8 3.8 9.5 3.8Q12.2 3.8 12.2 6.8Q11.2 5.4 9.5 5.6Q7.8 5.4 6.8 6.8Z" fill="#8a4a1a"/><path d="M5 12.6L6 11.6M14 12.6L13 11.6" stroke="#e89040" stroke-width="1.6"/></svg>
<svg class="a" style="left:1162px;top:262px" width="16" height="16" viewBox="0 0 16 16"><rect x="3.5" y="0.8" width="11" height="14.5" rx="1" fill="#fff" stroke="#c4c4c4" stroke-width="1"/><rect x="1.4" y="0.5" width="2.4" height="15" fill="#c85a24"/><path d="M0.6 2H2.6M0.6 4H2.6M0.6 6H2.6M0.6 8H2.6M0.6 10H2.6M0.6 12H2.6M0.6 14H2.6" stroke="#e8e8e8" stroke-width="0.9"/><rect x="5" y="4" width="1.2" height="3" fill="#3a80e0"/><path d="M5.4 14Q5.4 9.6 9.5 9.6Q13.6 9.6 13.6 14Z" fill="#505a66"/><path d="M8.6 9.8L9.5 11.5L10.4 9.8Z" fill="#eee"/><circle cx="9.5" cy="7.2" r="2.5" fill="#f2c49a"/><path d="M6.8 6.8Q6.8 3.8 9.5 3.8Q12.2 3.8 12.2 6.8Q11.2 5.4 9.5 5.6Q7.8 5.4 6.8 6.8Z" fill="#8a4a1a"/><path d="M5 12.6L6 11.6M14 12.6L13 11.6" stroke="#e89040" stroke-width="1.6"/></svg>
<div class="a" style="left:1024px;top:64px;width:2px;height:1px;background:#4a78e0"></div><div class="a" style="left:1024px;top:64px;width:1px;height:2px;background:#4a78e0"></div><div class="a" style="left:1294px;top:64px;width:2px;height:1px;background:#4a78e0"></div>
<div class="a" style="left:1024px;top:162px;width:2px;height:1px;background:#4a78e0"></div><div class="a" style="left:1024px;top:162px;width:1px;height:2px;background:#4a78e0"></div><div class="a" style="left:1294px;top:162px;width:2px;height:1px;background:#4a78e0"></div>
<div class="a" style="left:1024px;top:304px;width:2px;height:1px;background:#4a78e0"></div><div class="a" style="left:1024px;top:304px;width:1px;height:2px;background:#4a78e0"></div><div class="a" style="left:1294px;top:304px;width:2px;height:1px;background:#4a78e0"></div>
<div class="a" style="left:51px;top:107px;width:1010px;height:723px;background:#f0f0f0;border:1px solid #a4a4a4;border-radius:8px;box-shadow:inset 0 0 0 1px #f8f8f8,0 20px 52px rgba(0,0,0,0.33),0 8px 14px rgba(0,0,0,0.07)"></div>
<svg class="a" style="left:60px;top:114px" width="16" height="16" viewBox="0 0 16 16"><rect x="0" y="0" width="16" height="8" fill="#f60a0a"/><rect x="0" y="8" width="16" height="8" fill="#0a58cc"/><rect x="0" y="15" width="16" height="1" fill="#0540a0"/><path d="M14.5 5.8H7.3Q5.6 5.8 5.6 7.2Q5.6 8.4 7.3 8.4H11.2Q12.7 8.4 12.6 9.8Q12.4 11 11 11H1.2" fill="none" stroke="#9a9a9a" stroke-width="1.2"/></svg>
<svg class="a" style="left:92px;top:114px" width="16" height="16" viewBox="0 0 16 16"><path d="M0.5 0.5H8L9.5 2.5H13.5V15H0.5Z" fill="#d0d0d0" stroke="#5a5a5a"/><path d="M2 3.5H12M2 5H12M2 6.5H12" stroke="#aaa" stroke-width="0.8"/><path d="M2.5 6.5H15.5L14.5 14.5H0.5Z" fill="#8db3e2" stroke="#2c64ac"/></svg>
<svg class="a" style="left:148px;top:114px" width="16" height="16" viewBox="0 0 16 16"><path d="M0.5 0.5H9.5L13.5 4.5V9M11 15.5H0.5V0.5" fill="#eef3f9" stroke="#4e5660" stroke-width="1"/><path d="M9.5 0.5V4.5H13.5" fill="#fff" stroke="#9a9ad0" stroke-width="0.8"/><path d="M7.2 14.2L14.6 6.8" stroke="#1d5fc8" stroke-width="3.2"/><path d="M7.6 13.6L14.4 6.8" stroke="#8cc4ff" stroke-width="1"/><path d="M13.6 5.6L15.8 7.8" stroke="#e81e1e" stroke-width="2.6"/><path d="M5 16.3L6 12.8L8.6 15.3Z" fill="#f4b83a" stroke="#c87a10" stroke-width="0.7"/><path d="M11.5 15.5H13.5V12.5" fill="none" stroke="#4e5660" stroke-width="1"/></svg>
<span class="t" style="left:113.60px;top:117.22px;font-size:12.5px;font-weight:400;color:#000;letter-spacing:-0.485px;">File</span>
<span class="t" style="left:169.20px;top:117.22px;font-size:12.5px;font-weight:400;color:#000;letter-spacing:-0.382px;">Edit</span>
<span class="t" style="left:205.50px;top:117.22px;font-size:12.5px;font-weight:400;color:#000;letter-spacing:-0.082px;">Options</span>
<span class="t" style="left:487.60px;top:116.62px;font-size:12.5px;font-weight:400;color:#505050;letter-spacing:-0.187px;">Registration of individuals</span>
<div class="a" style="left:945px;top:122px;width:10px;height:1px;background:#222"></div>
<div class="a" style="left:989px;top:117px;width:10px;height:10px;border:1px solid #222;border-radius:2px"></div>
<svg class="a" style="left:1032px;top:117px" width="11" height="11"><path d="M0.5 0.5L10.5 10.5M10.5 0.5L0.5 10.5" stroke="#222" stroke-width="1.1"/></svg>
<div class="a" style="left:54px;top:145px;width:732px;height:646px;border:1px solid #d0d0d0"></div>
<div class="a" style="left:58px;top:140px;width:104px;height:12px;background:#f0f0f0"></div>
<span class="t" style="left:59.40px;top:141.44px;font-size:10.0px;font-weight:700;color:#000;letter-spacing:0.204px;">Register individuals</span>
<div class="a" style="left:59px;top:156px;width:722px;height:630px;border:1px solid #c8c8c8"></div>
<div class="a" style="left:790px;top:146px;width:268px;height:645px;border:1px solid #d0d0d0"></div>
<div class="a" style="left:794px;top:140px;width:84px;height:12px;background:#f0f0f0"></div>
<span class="t" style="left:795.70px;top:141.42px;font-size:12.5px;font-weight:400;color:#000;letter-spacing:-0.472px;">Effected Draws</span>
<div class="a" style="left:795px;top:158px;width:258px;height:628px;background:#fff;border:1px solid #c0c0c0"></div>
<span class="t" style="left:242.50px;top:257.42px;font-size:12.5px;font-weight:400;color:#000;letter-spacing:-0.095px;">Club*</span>
<span class="t" style="left:242.50px;top:285.42px;font-size:12.5px;font-weight:400;color:#000;letter-spacing:-0.086px;">Competitors*</span>
<span class="t" style="left:242.50px;top:308.42px;font-size:12.5px;font-weight:400;color:#000;letter-spacing:-0.403px;">Categories*</span>
<div class="a" style="left:318px;top:251px;width:131px;height:22px;background:#fff;border:1px solid #c8c8c8;border-radius:3px"></div>
<div class="a" style="left:428px;top:252px;width:1px;height:20px;background:#d0d0d0"></div>
<div class="a" style="left:433px;top:259px;width:0;height:0;border-left:5px solid transparent;border-right:5px solid transparent;border-top:6px solid #555"></div>
<span class="t" style="left:324.80px;top:257.42px;font-size:12.5px;font-weight:400;color:#000;letter-spacing:-0.515px;">Best Club(MYC)</span>
<div class="a" style="left:318px;top:279px;width:115px;height:22px;background:#fff;border:1px solid #c8c8c8;border-radius:3px"></div>
<div class="a" style="left:412px;top:280px;width:1px;height:20px;background:#d0d0d0"></div>
<div class="a" style="left:417px;top:287px;width:0;height:0;border-left:5px solid transparent;border-right:5px solid transparent;border-top:6px solid #555"></div>
<span class="t" style="left:324.80px;top:285.42px;font-size:12.5px;font-weight:400;color:#000;letter-spacing:-0.587px;">McConner Sara</span>
<div class="a" style="left:469px;top:251px;width:22px;height:22px;background:#fff;border:1px solid #c8c8c8;border-radius:3px"></div>
<div class="a" style="left:544px;top:251px;width:22px;height:22px;background:#fff;border:1px solid #c8c8c8;border-radius:3px"></div>
<div class="a" style="left:572px;top:251px;width:22px;height:22px;background:#fff;border:1px solid #c8c8c8;border-radius:3px"></div>
<svg class="a" style="left:471px;top:253px" width="16" height="16" viewBox="0 0 16 16"><circle cx="6" cy="6" r="5" fill="#9cccf4" stroke="#3a4a8a" stroke-width="1"/><path d="M1.3 6.4Q6 4.6 10.7 6.4" stroke="#1e64d8" stroke-width="1.6" fill="none"/><ellipse cx="5.6" cy="3.6" rx="2.6" ry="1.4" fill="#e2f0ff"/><ellipse cx="6" cy="8.6" rx="3" ry="1.2" fill="#cfe4f8"/><path d="M10.2 10.2L14.4 14.2" stroke="#8a5a08" stroke-width="3.4" stroke-linecap="round"/><path d="M10.2 10.2L14.4 14.2" stroke="#f6c842" stroke-width="2" stroke-linecap="round"/></svg>
<svg class="a" style="left:547px;top:254px" width="16" height="16" viewBox="0 0 16 16"><path d="M0.5 0.5H9.5L13.5 4.5V9M11 15.5H0.5V0.5" fill="#eef3f9" stroke="#4e5660" stroke-width="1"/><path d="M9.5 0.5V4.5H13.5" fill="#fff" stroke="#9a9ad0" stroke-width="0.8"/><path d="M7.2 14.2L14.6 6.8" stroke="#1d5fc8" stroke-width="3.2"/><path d="M7.6 13.6L14.4 6.8" stroke="#8cc4ff" stroke-width="1"/><path d="M13.6 5.6L15.8 7.8" stroke="#e81e1e" stroke-width="2.6"/><path d="M5 16.3L6 12.8L8.6 15.3Z" fill="#f4b83a" stroke="#c87a10" stroke-width="0.7"/><path d="M11.5 15.5H13.5V12.5" fill="none" stroke="#4e5660" stroke-width="1"/></svg>
<svg class="a" style="left:575px;top:254px" width="15" height="15" viewBox="0 0 16 16"><circle cx="8" cy="8" r="7.2" fill="#6cbc5e" stroke="#4a9a40" stroke-width="0.8"/><circle cx="8" cy="8" r="5.4" fill="#5aaa4c"/><path d="M8 4.5V11.5M4.5 8H11.5" stroke="#fff" stroke-width="2.2"/></svg>
<div class="a" style="left:469px;top:279px;width:22px;height:22px;background:#fff;border:1px solid #c8c8c8;border-radius:3px"></div>
<div class="a" style="left:544px;top:279px;width:22px;height:22px;background:#fff;border:1px solid #c8c8c8;border-radius:3px"></div>
<div class="a" style="left:572px;top:279px;width:22px;height:22px;background:#fff;border:1px solid #c8c8c8;border-radius:3px"></div>
<svg class="a" style="left:471px;top:281px" width="16" height="16" viewBox="0 0 16 16"><circle cx="6" cy="6" r="5" fill="#9cccf4" stroke="#3a4a8a" stroke-width="1"/><path d="M1.3 6.4Q6 4.6 10.7 6.4" stroke="#1e64d8" stroke-width="1.6" fill="none"/><ellipse cx="5.6" cy="3.6" rx="2.6" ry="1.4" fill="#e2f0ff"/><ellipse cx="6" cy="8.6" rx="3" ry="1.2" fill="#cfe4f8"/><path d="M10.2 10.2L14.4 14.2" stroke="#8a5a08" stroke-width="3.4" stroke-linecap="round"/><path d="M10.2 10.2L14.4 14.2" stroke="#f6c842" stroke-width="2" stroke-linecap="round"/></svg>
<svg class="a" style="left:547px;top:282px" width="16" height="16" viewBox="0 0 16 16"><path d="M0.5 0.5H9.5L13.5 4.5V9M11 15.5H0.5V0.5" fill="#eef3f9" stroke="#4e5660" stroke-width="1"/><path d="M9.5 0.5V4.5H13.5" fill="#fff" stroke="#9a9ad0" stroke-width="0.8"/><path d="M7.2 14.2L14.6 6.8" stroke="#1d5fc8" stroke-width="3.2"/><path d="M7.6 13.6L14.4 6.8" stroke="#8cc4ff" stroke-width="1"/><path d="M13.6 5.6L15.8 7.8" stroke="#e81e1e" stroke-width="2.6"/><path d="M5 16.3L6 12.8L8.6 15.3Z" fill="#f4b83a" stroke="#c87a10" stroke-width="0.7"/><path d="M11.5 15.5H13.5V12.5" fill="none" stroke="#4e5660" stroke-width="1"/></svg>
<svg class="a" style="left:575px;top:282px" width="15" height="15" viewBox="0 0 16 16"><circle cx="8" cy="8" r="7.2" fill="#6cbc5e" stroke="#4a9a40" stroke-width="0.8"/><circle cx="8" cy="8" r="5.4" fill="#5aaa4c"/><path d="M8 4.5V11.5M4.5 8H11.5" stroke="#fff" stroke-width="2.2"/></svg>
<div class="a" style="left:317px;top:305px;width:223px;height:365px;background:#fff;border:2px solid #8db8e6"></div>
<div class="a" style="left:319px;top:416px;width:218px;height:18px;background:#2a74c0"></div>
<span class="t" style="left:324.80px;top:312.12px;font-size:12.5px;font-weight:400;color:#000;letter-spacing:-0.482px;">Category 1 (18 - 98,)</span>
<span class="t" style="left:324.80px;top:330.12px;font-size:12.5px;font-weight:400;color:#000;letter-spacing:-0.482px;">Category 2 (18 - 98,)</span>
<span class="t" style="left:324.80px;top:348.12px;font-size:12.5px;font-weight:400;color:#000;letter-spacing:-0.553px;">Category 2 +199508 YYYYMM (18 - 98,)</span>
<span class="t" style="left:324.80px;top:366.12px;font-size:12.5px;font-weight:400;color:#000;letter-spacing:-0.555px;">Category 2 -199508 YYYYMM (18 - 98,)</span>
<span class="t" style="left:324.80px;top:384.12px;font-size:12.5px;font-weight:400;color:#000;letter-spacing:-0.358px;">Category 3 - female (18 - 98,f)</span>
<span class="t" style="left:324.80px;top:402.12px;font-size:12.5px;font-weight:400;color:#000;letter-spacing:-0.482px;">Category 6 (16 - 98,)</span>
<span class="t" style="left:324.80px;top:420.12px;font-size:12.5px;font-weight:400;color:#fff;letter-spacing:-0.361px;">Category 6 - female (16 - 98,)</span>
<span class="t" style="left:324.80px;top:438.12px;font-size:12.5px;font-weight:400;color:#000;letter-spacing:-0.394px;">Category 6 - male (16 - 98,)</span>
<div class="a" style="left:319px;top:677px;width:14px;height:14px;background:#fff;border:1px solid #8e8e8e;border-radius:2px"></div>
<span class="t" style="left:336.20px;top:678.02px;font-size:12.5px;font-weight:400;color:#000;letter-spacing:-0.330px;">Save in Entry Waitinglist</span>
<div class="a" style="left:399px;top:800px;width:112px;height:22px;background:#e4e7eb;border:1px solid #7ea6d6;border-radius:3px"></div>
<span class="t" style="left:433.20px;top:806.42px;font-size:12.5px;font-weight:400;color:#000;letter-spacing:-0.635px;">Save entries</span>
<svg class="a" style="left:415px;top:804px" width="14" height="14" viewBox="0 0 16 16"><rect x="0.5" y="0.5" width="15" height="15" fill="#4a78c0" stroke="#1a2a50" stroke-width="1"/><rect x="3" y="0.5" width="10" height="2" fill="#e07060"/><rect x="3" y="2.5" width="10" height="5.5" fill="#fff"/><rect x="4" y="4.5" width="8" height="2.5" fill="#e8eaea"/><rect x="4" y="9.5" width="8" height="5.5" fill="#8a8a8a"/><rect x="5.5" y="10.5" width="1.5" height="3.5" fill="#3a66b0"/><rect x="8" y="10.5" width="3" height="3" fill="#c8c8c8"/></svg>
<div class="a" style="left:520px;top:800px;width:79px;height:22px;background:#fff;border:1px solid #d0d0d0;border-radius:3px"></div>
<span class="t" style="left:554.40px;top:806.42px;font-size:12.5px;font-weight:400;color:#000;letter-spacing:-0.592px;">Close</span>
<svg class="a" style="left:536px;top:803px" width="16" height="16" viewBox="0 0 16 16"><circle cx="8" cy="8" r="7.2" fill="#e2564a" stroke="#c83a30" stroke-width="0.8"/><circle cx="8" cy="6" r="5" fill="#f08a80" opacity="0.5"/><rect x="3.8" y="6.8" width="8.4" height="2.6" rx="0.6" fill="#fff"/></svg>
<div class="a" style="left:608px;top:800px;width:104px;height:22px;background:#fff;border:1px solid #d0d0d0;border-radius:3px"></div>
<span class="t" style="left:639.50px;top:806.42px;font-size:12.5px;font-weight:400;color:#000;letter-spacing:-0.471px;">Reset form</span>
<svg class="a" style="left:622px;top:803px" width="16" height="16" viewBox="0 0 16 16"><path d="M2 8.2V5.5Q2 4 3.6 4H9.8V1.4L13.5 5L9.8 8.6V6.2H4.2V8.2Z" fill="#a8dcef" stroke="#136a86" stroke-width="1"/><path d="M14 7.8V10.5Q14 12 12.4 12H6.2V14.6L2.5 11L6.2 7.4V9.8H11.8V7.8Z" fill="#a8dcef" stroke="#136a86" stroke-width="1"/></svg></body></html>
